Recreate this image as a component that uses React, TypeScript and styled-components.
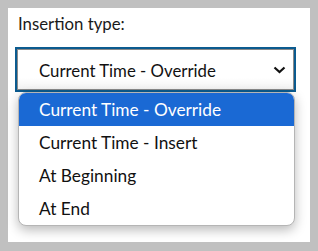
import React from "react";
import styled, { createGlobalStyle } from "styled-components";

const Global = createGlobalStyle`
  html, body { margin: 0; padding: 0; background: #c0c0c0; }
  body { padding: 8px; font-family: Lato, "Open Sans", sans-serif; }
`;

const Panel = styled.div`
  width: 302px;
  height: 234px;
  box-sizing: border-box;
  background: #ffffff;
  padding: 6px 7px 0 7px;
  display: flex;
  flex-direction: column;
`;

const Label = styled.div`
  font-size: 16.8px;
  line-height: 20px;
  color: #1a1a1a;
  padding-left: 3px;
  margin-bottom: 13px;
`;

const Field = styled.div`
  position: relative;
  width: 281px;
`;

const SelectBox = styled.div`
  height: 45px;
  box-sizing: border-box;
  border: 2px solid #0b5b8f;
  box-shadow: inset 0 0 0 1px #8a8a8a;
  background: linear-gradient(#ffffff 70%, #f2f2f2);
  display: flex;
  align-items: center;
  justify-content: space-between;
  padding: 1px 8px 0 22px;
  font-size: 16.8px;
  color: #111;
`;

const Chevron = styled.svg`
  width: 13px;
  height: 8px;
  display: block;
`;

const Menu = styled.ul`
  position: absolute;
  left: 3px;
  top: 45px;
  width: 277px;
  margin: 0;
  padding: 0;
  list-style: none;
  background: #fff;
  border: 1px solid #b5b5b5;
  border-radius: 8px;
  overflow: hidden;
  box-sizing: border-box;
  box-shadow: 0 4px 12px rgba(0, 0, 0, 0.28);
`;

const Item = styled.li<{ $active?: boolean }>`
  height: 33px;
  display: flex;
  align-items: center;
  padding-left: 20px;
  font-size: 17.3px;
  color: ${(p) => (p.$active ? "#ffffff" : "#111")};
  background: ${(p) => (p.$active ? "#1a69d4" : "transparent")};
`;

const options = [
  "Current Time - Override",
  "Current Time - Insert",
  "At Beginning",
  "At End",
];

export default function App() {
  return (
    <>
      <Global />
      <Panel>
        <Label>Insertion type:</Label>
        <Field>
          <SelectBox>
            <span>Current Time - Override</span>
            <Chevron viewBox="0 0 13 8">
              <path d="M1.5 1.5 L6.5 6 L11.5 1.5" fill="none" stroke="#111" strokeWidth="2.2" />
            </Chevron>
          </SelectBox>
          <Menu>
            {options.map((o, i) => (
              <Item key={o} $active={i === 0}>
                {o}
              </Item>
            ))}
          </Menu>
        </Field>
      </Panel>
    </>
  );
}
